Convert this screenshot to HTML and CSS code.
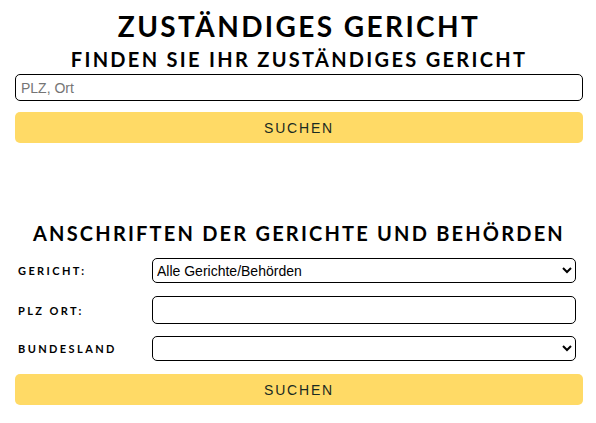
FILE: index.html
```html
<!DOCTYPE html>
<html lang="de">
<head>
    <meta charset="UTF-8">
    <meta name="viewport" content="width=device-width, initial-scale=1.0">
    <title>Zuständiges Gericht</title>
    <link rel="stylesheet" href="styles.css">
</head>
<body>
    <div class="page">
        <section class="finder">
            <h1>Zuständiges Gericht</h1>
            <h2>Finden Sie Ihr zuständiges Gericht</h2>
            <form class="finder-form">
                <input type="text" class="plz-input" placeholder="PLZ, Ort">
                <button type="button" class="search-button">Suchen</button>
            </form>
        </section>

        <section class="addresses">
            <h3>Anschriften der Gerichte und Behörden</h3>
            <form class="address-form">
                <div class="form-row">
                    <label for="court">Gericht:</label>
                    <select id="court">
                        <option>Alle Gerichte/Behörden</option>
                    </select>
                </div>
                <div class="form-row">
                    <label for="city">PLZ Ort:</label>
                    <input type="text" id="city">
                </div>
                <div class="form-row">
                    <label for="state">Bundesland</label>
                    <select id="state">
                        <option></option>
                    </select>
                </div>
                <button type="button" class="search-button">Suchen</button>
            </form>
        </section>
    </div>
</body>
</html>
```

FILE: styles.css
```css
/* Basic reset */
* {
    margin: 0;
    padding: 0;
    box-sizing: border-box;
}

body {
    background: #ffffff;
    font-family: Lato, "Open Sans", sans-serif;
    color: #000;
}

.page {
    padding: 11px 13px 0 15px;
}

h1, h2, h3 {
    text-align: center;
    text-transform: uppercase;
    font-weight: 700;
    color: #000;
    white-space: nowrap;
}

h1 {
    font-size: 28px;
    line-height: 30px;
    letter-spacing: 2.4px;
}

h2 {
    font-size: 20px;
    line-height: 24px;
    letter-spacing: 2.3px;
    margin-top: 6px;
}

.finder-form {
    display: flex;
    flex-direction: column;
    gap: 11px;
    margin-top: 3px;
}

input, select {
    font-family: Arial, "Liberation Sans", sans-serif;
    font-size: 14px;
    border: 1px solid #000;
    border-radius: 5px;
    background: #fff;
    color: #000;
}

.plz-input {
    height: 27px;
    padding: 0 5px;
}

.plz-input::placeholder {
    color: #757575;
}

.search-button {
    height: 31px;
    width: 100%;
    border: none;
    border-radius: 5px;
    background-color: #ffda66;
    font-family: Arial, "Liberation Sans", sans-serif;
    font-size: 14px;
    letter-spacing: 1.8px;
    text-transform: uppercase;
    color: #1a2a22;
    cursor: pointer;
}

.addresses {
    margin-top: 78px;
}

h3 {
    font-size: 20px;
    line-height: 24px;
    letter-spacing: 2.2px;
}

.address-form {
    margin-top: 13px;
}

.form-row {
    display: flex;
    align-items: center;
    margin-bottom: 13px;
    padding: 0 7px 0 3px;
}

.form-row:nth-child(2) {
    margin-bottom: 12px;
}

.form-row label {
    width: 134px;
    font-size: 11px;
    font-weight: 700;
    letter-spacing: 2.4px;
    text-transform: uppercase;
}

.form-row select {
    flex: 1;
    height: 25px;
    padding: 0;
}

.form-row input {
    flex: 1;
    height: 28px;
    padding: 0 5px;
}
```
